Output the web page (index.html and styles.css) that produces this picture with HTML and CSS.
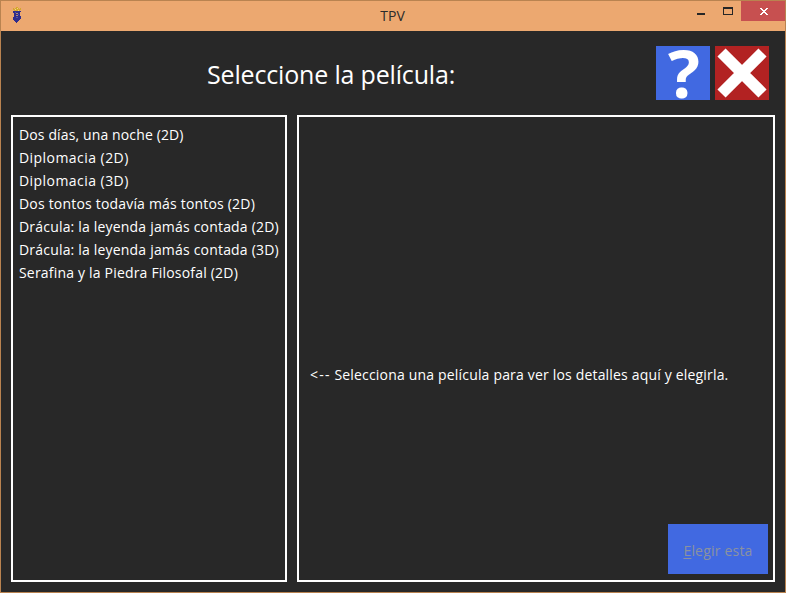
FILE: index.html
```html
<!DOCTYPE html>
<html lang="es">
<head>
<meta charset="utf-8">
<title>TPV</title>
<link rel="stylesheet" href="styles.css">
</head>
<body>
<div class="window">
  <header class="titlebar">
    <svg class="app-icon" width="8" height="16" viewBox="0 0 8 16" shape-rendering="crispEdges">
      <path fill="#d5a72f" d="M0 1h1v1h1v-1h1v-1h2v1h1v1h1v-1h1v2h-1v1h-6v-1h-1z"/>
      <path fill="#f0d77a" d="M2 2h1v1h-1zM4 1h1v1h-1zM5 3h1v1h-1z"/>
      <path fill="#2f2c8c" d="M0 4h8v1h-1v4h1v3h-1v1h-1v1h-1v1h-1v1h-1v-1h-1v-1h-1v-1h-1v-3h1v-4h-1z"/>
      <path fill="#b38a75" d="M3 6h2v1h-2zM3 8h2v1h-2z"/>
      <path fill="#5650a0" d="M2 5h1v1h-1zM5 7h1v1h-1zM3 10h2v1h-2z"/>
    </svg>
    <h1 class="caption">TPV</h1>
    <div class="controls">
      <svg width="44" height="20" viewBox="0 0 44 20" shape-rendering="crispEdges">
        <path fill="#262626" d="M1 12h8v2H1z"/>
        <path fill="#262626" fill-rule="evenodd" d="M27 6h10v8H27zM28 8v5h8V8z"/>
      </svg>
      <button class="close" aria-label="Cerrar">
        <svg width="8" height="7" viewBox="0 0 8 7" shape-rendering="crispEdges">
          <path fill="#fff" d="M0 0h2v1h1v1h2v-1h1v-1h2v1h-1v1h-1v1h-1v1h1v1h1v1h1v1h-2v-1h-1v-1h-2v1h-1v1h-2v-1h1v-1h1v-1h1v-1h-1v-1h-1v-1h-1z"/>
        </svg>
      </button>
    </div>
  </header>
  <main class="content">
    <div class="heading">
      <h2 class="prompt">Seleccione la película:</h2>
      <div class="actions">
        <button class="tile help" aria-label="Ayuda">
          <svg width="54" height="54" viewBox="0 0 54 54"><text x="28" y="51.500" text-anchor="middle">?</text></svg>
        </button>
        <button class="tile cancel" aria-label="Cancelar">
          <svg width="54" height="54" viewBox="0 0 54 54"><path d="M6.500 6.500 47.500 47.500M47.500 6.500 6.500 47.500" stroke="#fff" stroke-width="11.500"/></svg>
        </button>
      </div>
    </div>
    <div class="panels">
      <ul class="panel movies">
        <li>Dos días, una noche (2D)</li>
        <li class="loose">Diplomacia (2D)</li>
        <li class="loose">Diplomacia (3D)</li>
        <li>Dos tontos todavía más tontos (2D)</li>
        <li>Drácula: la leyenda jamás contada (2D)</li>
        <li>Drácula: la leyenda jamás contada (3D)</li>
        <li>Serafina y la Piedra Filosofal (2D)</li>
      </ul>
      <section class="panel details">
        <p class="hint"><span class="arrow">&lt;--</span> Selecciona una película para ver los detalles aquí y elegirla.</p>
        <button class="choose" disabled><u>E</u>legir esta</button>
      </section>
    </div>
  </main>
</div>
</body>
</html>
```
FILE: styles.css
```css
* { box-sizing: border-box; margin: 0; padding: 0; }
body { font-family: "Open Sans", "Noto Sans", sans-serif; font-size: 14px; color: #fff; }
button { border: 0; font: inherit; }
svg { display: block; }
.window {
  width: 786px; height: 593px;
  display: flex; flex-direction: column;
  background: #282828;
  border: 1px solid #b98350;
  overflow: hidden;
}
.titlebar {
  height: 30px; flex: none;
  display: grid; grid-template-columns: 90px 1fr 90px;
  background: #eca870;
  margin-right: -1px;
}
.app-icon { margin: 6px 0 0 12px; }
.caption { font-size: 14px; font-weight: 400; line-height: 29px; text-align: center; color: #2b2b2b; padding-right: 2px; }
.controls { display: flex; }
.controls > svg { flex: none; }
.close { width: 45px; height: 20px; flex: none; margin-left: 1px; padding: 0 0 5px 19px; display: flex; align-items: flex-end; background: #c75050; }
.close svg { margin-bottom: 1px; }
.content { flex: 1; display: flex; flex-direction: column; padding: 15px 10px 10px; }
.heading { height: 54px; display: flex; justify-content: space-between; margin-bottom: 15px; }
.prompt { padding-left: 196px; font-size: 25px; font-weight: 400; line-height: 57px; letter-spacing: -0.17px; white-space: nowrap; }
.actions { display: flex; gap: 5px; margin-right: 6px; }
.tile { width: 54px; height: 54px; }
.help { background: #4169e1; }
.help svg { overflow: visible; }
.help text { fill: #fff; font-size: 67px; font-weight: 700; }
.cancel { background: #b22222; }
.panels { flex: 1; display: flex; gap: 10px; }
.panel { border: 2px solid #fff; }
.movies { width: 276px; padding: 6px; list-style: none; line-height: 23px; letter-spacing: 0.19px; white-space: nowrap; }
.movies li:first-child { letter-spacing: 0.13px; }
.movies .loose { letter-spacing: 0.45px; }
.details { width: 478px; display: flex; flex-direction: column; padding: 246px 5px 6px 11px; }
.hint { line-height: 23px; letter-spacing: 0.18px; white-space: nowrap; }
.hint .arrow { letter-spacing: 1.2px; }
.choose { width: 100px; height: 50px; margin-top: auto; padding-top: 3px; align-self: flex-end; background: #4169e1; color: #8b929f; letter-spacing: 0.2px; }
.choose u { text-underline-offset: 2px; }
```
